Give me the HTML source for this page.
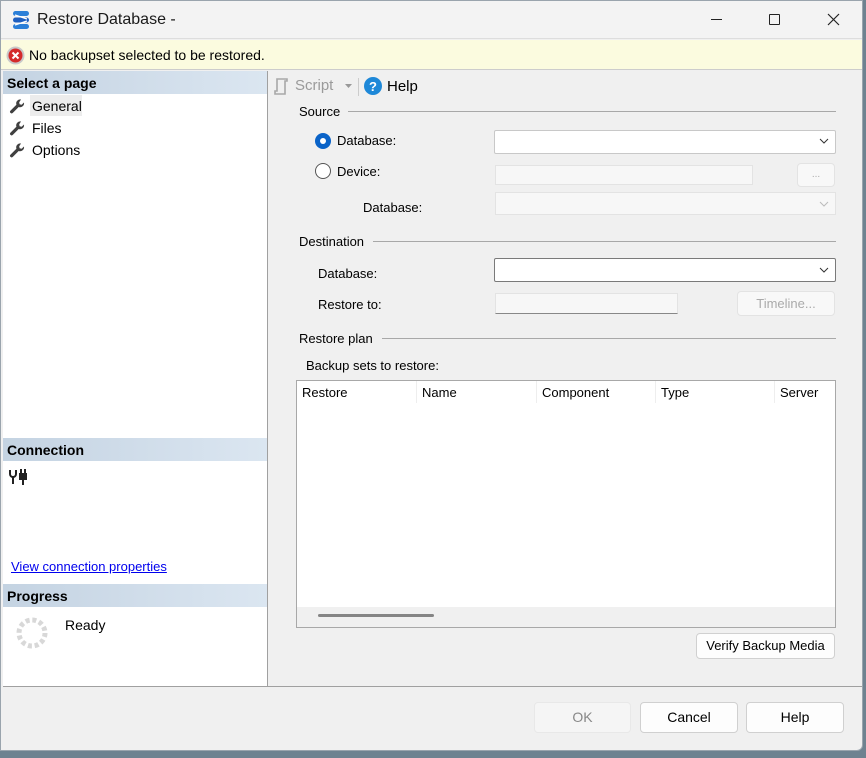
<!DOCTYPE html>
<html><head><style>
*{margin:0;padding:0;box-sizing:border-box}
body{width:866px;height:758px;background:#6e8290;font-family:"Liberation Sans",sans-serif;font-size:13px;color:#000;position:relative;overflow:hidden}
.a{position:absolute}
.win{left:0;top:0;width:863px;height:751px;background:#f0f0f0;border:1px solid #9aa4ad;border-radius:0 0 6px 0}
.title{left:1px;top:1px;width:861px;height:38px;background:#f3f3f3;border-bottom:1px solid #ddd}
.msg{left:1px;top:40px;width:861px;height:30px;background:#fbfbdf;border-bottom:1px solid #ccc}
.left{left:3px;top:71px;width:265px;height:615px;background:#fff;border-right:1px solid #a0a0a0}
.hdr{left:0;width:264px;height:23px;background:linear-gradient(90deg,#c4d3e2,#dbe6f1);font-weight:bold;font-size:14px;padding:4px 4px}
.wr{font-size:14px}
.btn{background:#fdfdfd;border:1px solid #d0d0d0;border-radius:4px;text-align:center;font-size:14px}
.inp{background:#fff;border:1px solid #c8c8c8;border-radius:2px}
.dis{background:#f7f7f7;border:1px solid #e3e3e3}
.line{height:1px;background:#a8a8a8}
.lbl{font-size:13px}
</style></head><body>
<div class="a win"></div>
<div class="a title"></div>
<svg class="a" style="left:12px;top:10px" width="18" height="20" viewBox="0 0 18 20"><rect x="1" y="1" width="16" height="5" rx="2.5" fill="#2b7fd8"/><rect x="1" y="7.5" width="16" height="5" rx="2.5" fill="#1e5fc0"/><rect x="1" y="14" width="16" height="5" rx="2.5" fill="#2b7fd8"/><path d="M3 5L15 9M15 11L3 15" stroke="#fff" stroke-width="1.2"/></svg>
<div class="a" style="left:37px;top:11px;font-size:16px;color:#1a1a1a">Restore Database -</div>
<div class="a" style="left:711px;top:19px;width:11px;height:1px;background:#222"></div>
<div class="a" style="left:769px;top:14px;width:11px;height:11px;border:1px solid #222;border-radius:1px"></div>
<svg class="a" style="left:827px;top:13px" width="13" height="13"><path d="M1 1L12 12M12 1L1 12" stroke="#222" stroke-width="1.2"/></svg>
<div class="a msg"></div>
<svg class="a" style="left:6px;top:46px" width="19" height="19"><circle cx="9.5" cy="9.5" r="9" fill="#c9c9c9"/><circle cx="9.5" cy="9.5" r="7" fill="#d42b2b"/><path d="M6.5 6.5L12.5 12.5M12.5 6.5L6.5 12.5" stroke="#fff" stroke-width="2"/></svg>
<div class="a" style="left:29px;top:47px;font-size:14px">No backupset selected to be restored.</div>
<svg width="0" height="0" style="position:absolute"><defs><g id="wr"><path d="M12 1.5a4 4 0 0 0-4.6 5.2L1.5 12.6a1.6 1.6 0 0 0 2.3 2.3l5.9-5.9A4 4 0 0 0 15 4.5l-2.4 2.2-2-.4-.4-2z" fill="#404040"/></g></defs></svg>
<div class="a left">
 <div class="a hdr" style="top:0">Select a page</div>
 <div class="a" style="left:27px;top:24px;width:52px;height:21px;background:#ececec"></div>
 <svg class="a" style="left:6px;top:27px" width="17" height="17"><use href="#wr"/></svg>
 <div class="a wr" style="left:29px;top:27px">General</div>
 <svg class="a" style="left:6px;top:49px" width="17" height="17"><use href="#wr"/></svg>
 <div class="a wr" style="left:29px;top:49px">Files</div>
 <svg class="a" style="left:6px;top:71px" width="17" height="17"><use href="#wr"/></svg>
 <div class="a wr" style="left:29px;top:71px">Options</div>
 <div class="a hdr" style="top:367px">Connection</div>
 <svg class="a" style="left:6px;top:398px" width="20" height="16"><path d="M1 1v4a3 3 0 0 0 6 0V1M4 8v7" stroke="#222" stroke-width="2" fill="none"/><rect x="10" y="4" width="8" height="7" fill="#222"/><path d="M12 0v4M16 0v4M14 11v5" stroke="#222" stroke-width="2"/></svg>
 <div class="a" style="left:8px;top:488px;font-size:13px;color:#0000ee;text-decoration:underline">View connection properties</div>
 <div class="a hdr" style="top:513px">Progress</div>
 <svg class="a" style="left:12px;top:545px" width="34" height="34"><circle cx="17" cy="17" r="13" fill="none" stroke="#d8d8d8" stroke-width="5" stroke-dasharray="4 2.8"/></svg>
 <div class="a wr" style="left:62px;top:546px">Ready</div>
</div>
<!-- toolbar -->
<svg class="a" style="left:273px;top:77px" width="16" height="18"><path d="M4 2h10v2h-2v13H2v-3h2z" fill="none" stroke="#a8a8a8" stroke-width="1.6"/></svg>
<div class="a" style="left:295px;top:77px;font-size:15px;color:#9a9a9a">Script</div>
<svg class="a" style="left:345px;top:84px" width="7" height="4"><path d="M0 0h7L3.5 4z" fill="#999"/></svg>
<div class="a" style="left:358px;top:78px;width:1px;height:18px;background:#ccc"></div>
<svg class="a" style="left:364px;top:77px" width="18" height="18"><circle cx="9" cy="9" r="9" fill="#1e88d8"/><text x="9" y="14" font-size="13" font-weight="bold" fill="#fff" text-anchor="middle" font-family="Liberation Sans">?</text></svg>
<div class="a" style="left:387px;top:78px;font-size:15px">Help</div>
<!-- Source -->
<div class="a lbl" style="left:299px;top:104px">Source</div>
<div class="a line" style="left:348px;top:111px;width:488px"></div>
<div class="a" style="left:315px;top:133px;width:16px;height:16px;border-radius:50%;background:#0a63c8"></div>
<div class="a" style="left:320px;top:138px;width:6px;height:6px;border-radius:50%;background:#fff"></div>
<div class="a lbl" style="left:337px;top:133px">Database:</div>
<div class="a inp" style="left:494px;top:130px;width:342px;height:24px"></div>
<svg class="a" style="left:819px;top:138px" width="10" height="6"><path d="M1 1L5 5L9 1" stroke="#333" fill="none"/></svg>
<div class="a" style="left:315px;top:163px;width:16px;height:16px;border-radius:50%;border:1px solid #555;background:#fff"></div>
<div class="a lbl" style="left:337px;top:164px">Device:</div>
<div class="a dis" style="left:495px;top:165px;width:258px;height:20px"></div>
<div class="a btn" style="left:797px;top:163px;width:38px;height:24px;border-color:#e3e3e3;background:#f8f8f8;color:#aaa;font-size:10px;line-height:22px">...</div>
<div class="a lbl" style="left:363px;top:200px">Database:</div>
<div class="a dis" style="left:495px;top:192px;width:341px;height:23px"></div>
<svg class="a" style="left:819px;top:201px" width="10" height="6"><path d="M1 1L5 5L9 1" stroke="#bbb" fill="none"/></svg>
<!-- Destination -->
<div class="a lbl" style="left:299px;top:234px">Destination</div>
<div class="a line" style="left:373px;top:241px;width:463px"></div>
<div class="a lbl" style="left:318px;top:266px">Database:</div>
<div class="a inp" style="left:494px;top:258px;width:342px;height:24px;border-color:#7a7a7a"></div>
<svg class="a" style="left:819px;top:267px" width="10" height="6"><path d="M1 1L5 5L9 1" stroke="#333" fill="none"/></svg>
<div class="a lbl" style="left:318px;top:297px">Restore to:</div>
<div class="a dis" style="left:495px;top:293px;width:183px;height:21px;border-bottom-color:#888"></div>
<div class="a btn" style="left:737px;top:291px;width:98px;height:25px;border-color:#e3e3e3;background:#f8f8f8;color:#aaa;font-size:13px;line-height:23px">Timeline...</div>
<!-- Restore plan -->
<div class="a lbl" style="left:299px;top:331px">Restore plan</div>
<div class="a line" style="left:382px;top:338px;width:454px"></div>
<div class="a lbl" style="left:306px;top:358px">Backup sets to restore:</div>
<div class="a" style="left:296px;top:380px;width:540px;height:248px;background:#fff;border:1px solid #a8a8a8"></div>
<div class="a lbl" style="left:302px;top:385px">Restore</div>
<div class="a" style="left:416px;top:381px;width:1px;height:22px;background:#eee"></div>
<div class="a lbl" style="left:422px;top:385px">Name</div>
<div class="a" style="left:536px;top:381px;width:1px;height:22px;background:#eee"></div>
<div class="a lbl" style="left:542px;top:385px">Component</div>
<div class="a" style="left:655px;top:381px;width:1px;height:22px;background:#eee"></div>
<div class="a lbl" style="left:661px;top:385px">Type</div>
<div class="a" style="left:774px;top:381px;width:1px;height:22px;background:#eee"></div>
<div class="a lbl" style="left:780px;top:385px">Server</div>
<div class="a" style="left:297px;top:607px;width:538px;height:20px;background:#f0f0f0"></div>
<div class="a" style="left:318px;top:614px;width:116px;height:3px;border-radius:2px;background:#858585"></div>
<div class="a btn" style="left:696px;top:633px;width:139px;height:26px;line-height:24px;font-size:13px">Verify Backup Media</div>
<div class="a" style="left:3px;top:686px;width:859px;height:1px;background:#a0a0a0"></div>
<div class="a btn" style="left:534px;top:702px;width:97px;height:31px;line-height:29px;color:#888;background:#f5f5f5;border-color:#e8e8e8">OK</div>
<div class="a btn" style="left:640px;top:702px;width:98px;height:31px;line-height:29px">Cancel</div>
<div class="a btn" style="left:746px;top:702px;width:98px;height:31px;line-height:29px">Help</div>
</body></html>
